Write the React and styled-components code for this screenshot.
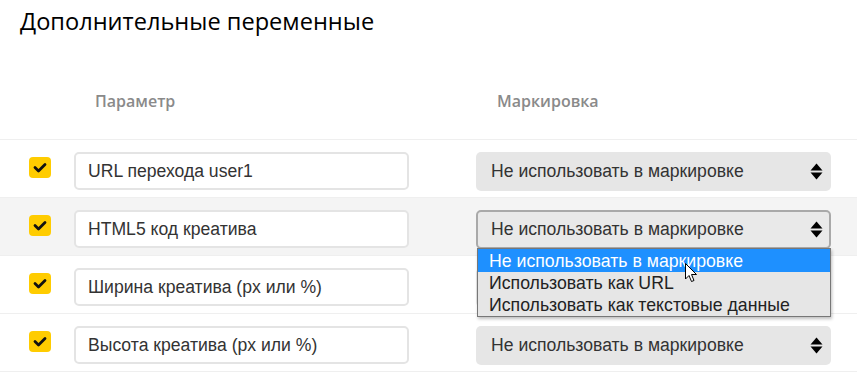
import React from "react";
import styled, { createGlobalStyle } from "styled-components";

const Global = createGlobalStyle`
  html, body { margin: 0; padding: 0; background: #fff; }
  body { width: 857px; height: 372px; overflow: hidden; }
  * { box-sizing: border-box; }
`;

const Page = styled.div`
  position: relative;
  width: 857px;
  font-family: "Liberation Sans", Arial, sans-serif;
`;

const Title = styled.h2`
  margin: 0;
  padding: 6px 0 0 20px;
  height: 52px;
  font-family: "Open Sans", sans-serif;
  font-weight: 500;
  font-size: 23.6px;
  line-height: 30px;
  color: #000;
`;

const Grid = styled.div`
  display: grid;
  grid-template-columns: 45px 402px 355px;
  padding-left: 29px;
`;

const Header = styled(Grid)`
  height: 88px;
  align-items: start;
  padding-top: 39px;
  border-bottom: 1px solid #efefef;
`;

const HeadLabel = styled.div`
  grid-column: ${(p) => p.col};
  padding-left: ${(p) => p.pad}px;
  font-family: "Open Sans", sans-serif;
  font-weight: 600;
  font-size: 16px;
  line-height: 20px;
  color: #8a8a8a;
`;

const Row = styled(Grid)`
  height: 58px;
  padding-top: 12px;
  align-items: start;
  border-bottom: 1px solid #efefef;
  background: ${(p) => (p.$hover ? "#f4f4f4" : "#fff")};
`;

const Check = styled.div`
  margin-top: 5px;
  width: 22px;
  height: 21px;
  border-radius: 4px;
  background: #ffcc00;
  display: flex;
  align-items: center;
  justify-content: center;
`;

const Input = styled.div`
  width: 335px;
  height: 38px;
  border: 2px solid #e4e4e4;
  border-radius: 5px;
  background: #fff;
  padding-left: 12px;
  display: flex;
  align-items: center;
  font-size: 17.6px;
  color: #333;
`;

const SelectWrap = styled.div`
  position: relative;
`;

const Select = styled.div`
  width: 355px;
  height: 39px;
  border-radius: 5px;
  background: ${(p) => (p.$focus ? "#e9e9e9" : "#e6e6e6")};
  border: ${(p) => (p.$focus ? "2px solid #a9a9a9" : "none")};
  padding-left: ${(p) => (p.$focus ? 13 : 15)}px;
  padding-right: ${(p) => (p.$focus ? 6 : 8)}px;
  display: flex;
  align-items: center;
  justify-content: space-between;
  font-size: 17.6px;
  color: #333;
`;

const List = styled.div`
  position: absolute;
  left: 1px;
  top: 38px;
  width: 354px;
  border: 1px solid #777;
  background: #e6e6e6;
  box-shadow: 1px 2px 3px rgba(0, 0, 0, 0.25);
  z-index: 2;
`;

const Option = styled.div`
  height: ${(p) => (p.$first ? 23 : 22)}px;
  padding-left: 11px;
  display: flex;
  align-items: center;
  font-size: 17.7px;
  line-height: 20px;
  color: ${(p) => (p.$active ? "#fff" : "#222")};
  background: ${(p) => (p.$active ? "#1e90ff" : "transparent")};
`;

const Cursor = styled.svg`
  position: absolute;
  left: 685px;
  top: 263px;
  z-index: 3;
`;

const CheckIcon = () => (
  <svg width="14" height="11" viewBox="0 0 14 11">
    <path d="M2 5.5 L5.5 9 L12 2.5" fill="none" stroke="#111" strokeWidth="2.8" strokeLinecap="round" strokeLinejoin="round" />
  </svg>
);

const Arrows = () => (
  <svg width="13" height="17" viewBox="0 0 13 17">
    <polygon points="0.5,7.5 6.5,0.5 12.5,7.5" fill="#000" />
    <polygon points="0.5,9.5 12.5,9.5 6.5,16.5" fill="#000" />
  </svg>
);

const rows = [
  "URL перехода user1",
  "HTML5 код креатива",
  "Ширина креатива (px или %)",
  "Высота креатива (px или %)",
];

const options = [
  "Не использовать в маркировке",
  "Использовать как URL",
  "Использовать как текстовые данные",
];

export default function App() {
  return (
    <Page>
      <Global />
      <Title>Дополнительные переменные</Title>
      <Header>
        <HeadLabel col={2} pad={21}>Параметр</HeadLabel>
        <HeadLabel col={3} pad={21}>Маркировка</HeadLabel>
      </Header>
      {rows.map((r, i) => (
        <Row key={r} $hover={i === 1}>
          <Check>
            <CheckIcon />
          </Check>
          <Input>{r}</Input>
          <SelectWrap>
            <Select $focus={i === 1}>
              <span>Не использовать в маркировке</span>
              <Arrows />
            </Select>
            {i === 1 && (
              <List>
                {options.map((o, j) => (
                  <Option key={o} $active={j === 0} $first={j === 0}>
                    {o}
                  </Option>
                ))}
              </List>
            )}
          </SelectWrap>
        </Row>
      ))}
      <Cursor width="13" height="21" viewBox="0 0 13 21">
        <path d="M0.5 0.5 L0.5 16 L4 12.5 L6.5 18.5 L9 17.5 L6.5 11.5 L11.5 11.5 Z" fill="#fff" stroke="#000" strokeWidth="1" strokeLinejoin="round" />
      </Cursor>
    </Page>
  );
}
